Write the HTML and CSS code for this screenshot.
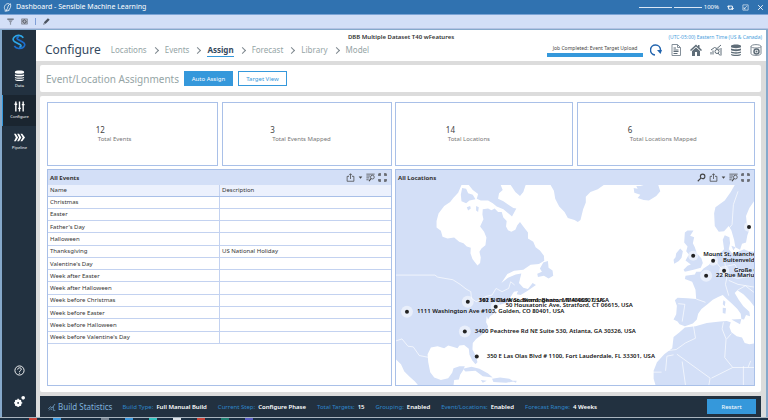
FILE: index.html
```html
<!DOCTYPE html>
<html lang="en">
<head>
  <meta charset="UTF-8" />
  <meta name="viewport" content="width=device-width, initial-scale=1.0"/>
  <title>Dashboard - Sensible Machine Learning</title>
  <link rel="stylesheet" href="styles.css">
</head>
<body>

  <!-- Shared icons -->
  <svg class="sprite" aria-hidden="true">
    <symbol id="i-share" viewBox="0 0 24 24"><path d="M8 9H3v13h18V9h-5M12 16V2M8 6l4-4 4 4" fill="none" stroke="currentColor" stroke-width="2"/></symbol>
    <symbol id="i-caret" viewBox="0 0 12 24"><path d="M1 9h10l-5 6z" fill="currentColor"/></symbol>
    <symbol id="i-filter" viewBox="0 0 24 24"><path d="M1 3h22M1 8h10M1 13h8M1 18h6" fill="none" stroke="currentColor" stroke-width="2"/><circle cx="17" cy="11" r="5" fill="none" stroke="currentColor" stroke-width="2"/><path d="M13 15l-5 7" stroke="currentColor" stroke-width="3"/></symbol>
    <symbol id="i-expand" viewBox="0 0 24 24"><path d="M2 8V2h6v6zM16 2h6v6h-6zM2 16h6v6H2zM16 16h6v6h-6z" fill="currentColor" opacity=".6"/><path d="M2 8V2h6M16 2h6v6M22 16v6h-6M8 22H2v-6" fill="none" stroke="currentColor" stroke-width="2"/></symbol>
    <symbol id="i-search" viewBox="0 0 24 24"><circle cx="15" cy="9" r="6" fill="none" stroke="currentColor" stroke-width="3"/><path d="M11 13l-9 9" stroke="currentColor" stroke-width="3"/></symbol>
    <symbol id="i-db" viewBox="0 0 24 24"><path d="M2 4c0-4 20-4 20 0v2c0 3-20 3-20 0zM2 9c3 2 17 2 20 0v3c0 3-20 3-20 0zM2 15c3 2 17 2 20 0v2c0 3-20 3-20 0zM2 20c3 2 17 2 20 0v1c0 4-20 4-20 0z" fill="currentColor"/></symbol>
  </svg>

  <header class="titlebar">
    <svg class="app-icon" viewBox="0 0 24 24"><path d="M17 2C8 0 2 8 4 15c1 5 8 9 14 3M20 2C11 5 15 14 8 20M20 2c2 8-1 14-6 17M4 21c3 2 6 1 8-3" fill="none" stroke="#fff" stroke-width="2"/></svg>
    <h1>Dashboard - Sensible Machine Learning</h1>
    <input class="zoom" type="range" min="0" max="100" value="54" aria-label="Zoom">
    <span class="zoom-value">100%</span>
    <button aria-label="Refresh"><svg viewBox="0 0 24 24"><path d="M5 16V7h13v5M19 9v9H6v-4M1 11l4-5 4 5M15 14l4 5 4-5" fill="none" stroke="#fff" stroke-width="3"/></svg></button>
    <button aria-label="Restore"><svg viewBox="0 0 24 24"><path d="M3 3h18v18H3zM7 17L17 7M7 11v6h6" fill="none" stroke="#fff" stroke-width="2"/></svg></button>
    <button aria-label="Close"><svg viewBox="0 0 24 24"><path d="M4 4l16 16M20 4L4 20" stroke="#fff" stroke-width="3"/></svg></button>
  </header>

  <div class="toolbar">
    <button aria-label="Filter"><svg viewBox="0 0 24 24"><path d="M1 2h22v4H1z" fill="#555c68"/><path d="M4 8h16l-6 7v8h-4v-8z" fill="#8f97a6"/></svg></button>
    <button aria-label="Refresh data"><svg viewBox="0 0 24 24"><path d="M2 3h20v18H2z" fill="#b2b8c6" stroke="#6a707c" stroke-width="2"/><path d="M7 14a5 5 0 0 1 9-5M17 10a5 5 0 0 1-9 5" fill="none" stroke="#3c4048" stroke-width="3"/></svg></button>
    <span class="divider"></span>
    <button aria-label="Edit"><svg viewBox="0 0 24 24"><path d="M1 23l3-9L17 1l6 5-13 13z" fill="#4b535f"/><path d="M1 23l3-8 5 5z" fill="#8f97a6"/></svg></button>
  </div>

  <div class="workspace">
    <nav class="rail">
      <svg class="logo" viewBox="0 0 48 48">
        <path d="M37 11C30 2 17 2 10 9c-5 5-5 11 1 14l17 9c4 3 2 7-3 8" fill="none" stroke="#2fa8e8" stroke-width="5"/>
        <path d="M10 36c6 9 20 10 28 3 5-5 4-11-2-14l-16-9c-4-3-1-7 4-8" fill="none" stroke="#1c6fd1" stroke-width="5"/>
      </svg>
      <a href="#"><svg viewBox="0 0 24 24"><use href="#i-db"/></svg>Data</a>
      <a href="#" class="active"><svg viewBox="0 0 24 24"><path d="M4 1v22M12 1v22M20 1v22M1 7h6M9 16h6M17 8h6" stroke="currentColor" stroke-width="3"/></svg>Configure</a>
      <a href="#"><svg viewBox="0 0 24 24"><path d="M0 4h4l5 8-5 8H0l4-8zM7 4h4l5 8-5 8H7l4-8zM14 4h4l6 8-6 8h-4l5-8z" fill="currentColor"/></svg>Pipeline</a>
      <button class="help" aria-label="Help"><svg viewBox="0 0 24 24"><circle cx="12" cy="12" r="10" fill="none" stroke="#fff" stroke-width="2"/><path d="M8 10c0-5 8-5 8-1 0 3-4 3-4 6M12 17v2" fill="none" stroke="#fff" stroke-width="2"/></svg></button>
      <button aria-label="Settings"><svg viewBox="0 0 24 24"><circle cx="9" cy="15" r="5" fill="none" stroke="#fff" stroke-width="5"/><path d="M9 6v18M0 15h18M3 9l12 12M15 9L3 21" stroke="#fff" stroke-width="3"/><circle cx="9" cy="15" r="2" fill="#223140"/><circle cx="20" cy="4" r="4" fill="#fff"/></svg></button>
    </nav>

    <main>
      <div class="page-head">
        <div class="head-top">
          <strong>DBB Multiple Dataset T40 wFeatures</strong>
          <a href="#" class="timezone">(UTC-05:00) Eastern Time (US &amp; Canada)</a>
        </div>
        <div class="head-main">
          <h2>Configure</h2>
          <ol class="steps">
            <li><a href="#">Locations</a></li>
            <li><a href="#">Events</a></li>
            <li><a href="#" class="current">Assign</a></li>
            <li><a href="#">Forecast</a></li>
            <li><a href="#">Library</a></li>
            <li><a href="#">Model</a></li>
          </ol>
          <div class="job">
            <span>Job Completed: Event Target Upload</span>
            <div class="job-bar"></div>
          </div>
          <div class="head-icons">
            <button aria-label="Refresh job"><svg viewBox="0 0 24 24"><path d="M10 22A10 10 0 1 1 21 12" fill="none" stroke="#2264ae" stroke-width="3"/><path d="M14 12h10l-3 8z" fill="#2264ae"/></svg></button>
            <button aria-label="Log"><svg viewBox="0 0 24 24"><path d="M4 1h11l6 6v16H4zM15 1v6h6" fill="none" stroke="#85909a" stroke-width="2"/><path d="M7 8h5M7 12h10M7 15h10M7 19h8" stroke="#5f6d78" stroke-width="2"/></svg></button>
            <button aria-label="Home"><svg viewBox="0 0 24 24"><path d="M12 1L0 12l2 2 10-9 10 9 2-2-5-5V2h-3v3z" fill="#5f6d78"/><path d="M4 14l8-7 8 7v10h-6v-8h-4v8H4z" fill="#5f6d78"/></svg></button>
            <button aria-label="Analysis"><svg viewBox="0 0 24 24"><path d="M2 12l7-5 5 2 8-7M2 16v5M6 13v8M22 8v15M18 9v3" fill="none" stroke="#5f6d78" stroke-width="2"/><circle cx="14" cy="15" r="4" fill="none" stroke="#5f6d78" stroke-width="2"/><path d="M16 18l4 5" stroke="#5f6d78" stroke-width="2"/></svg></button>
            <button aria-label="Data sources"><svg viewBox="0 0 24 24"><use href="#i-db"/></svg></button>
            <button aria-label="Data preview"><svg viewBox="0 0 24 24"><path d="M2 5c0-5 20-5 20 0v14c0 5-20 5-20 0zM2 5c0 4 20 4 20 0" fill="none" stroke="#7d8892" stroke-width="2"/><circle cx="13" cy="15" r="5" fill="none" stroke="#5f6d78" stroke-width="3"/><circle cx="13" cy="15" r="2" fill="#5f6d78"/></svg></button>
          </div>
        </div>
      </div>

      <div class="card sub-head">
        <h3>Event/Location Assignments</h3>
        <button class="btn primary">Auto Assign</button>
        <button class="btn">Target View</button>
      </div>

      <div class="card board">
        <div class="tiles">
          <div class="tile"><b>12</b><span>Total Events</span></div>
          <div class="tile"><b>3</b><span>Total Events Mapped</span></div>
        </div>
        <div class="tiles">
          <div class="tile"><b>14</b><span>Total Locations</span></div>
          <div class="tile"><b>6</b><span>Total Locations Mapped</span></div>
        </div>

        <section class="panel">
          <div class="panel-head">
            <h4>All Events</h4>
            <button aria-label="Export"><svg viewBox="0 0 24 24"><use href="#i-share"/></svg></button>
            <button class="caret" aria-label="Export options"><svg viewBox="0 0 12 24"><use href="#i-caret"/></svg></button>
            <button aria-label="Filter rows"><svg viewBox="0 0 24 24"><use href="#i-filter"/></svg></button>
            <button aria-label="Maximize"><svg viewBox="0 0 24 24"><use href="#i-expand"/></svg></button>
          </div>
          <table>
            <thead>
              <tr><th>Name</th><th>Description</th></tr>
            </thead>
            <tbody>
              <tr><td>Christmas</td><td></td></tr>
              <tr><td>Easter</td><td></td></tr>
              <tr><td>Father's Day</td><td></td></tr>
              <tr><td>Halloween</td><td></td></tr>
              <tr><td>Thanksgiving</td><td>US National Holiday</td></tr>
              <tr><td>Valentine's Day</td><td></td></tr>
              <tr><td>Week after Easter</td><td></td></tr>
              <tr><td>Week after Halloween</td><td></td></tr>
              <tr><td>Week before Christmas</td><td></td></tr>
              <tr><td>Week before Easter</td><td></td></tr>
              <tr><td>Week before Halloween</td><td></td></tr>
              <tr><td>Week before Valentine's Day</td><td></td></tr>
            </tbody>
          </table>
        </section>

        <section class="panel">
          <div class="panel-head">
            <h4>All Locations</h4>
            <button aria-label="Search"><svg viewBox="0 0 24 24"><use href="#i-search"/></svg></button>
            <button aria-label="Export"><svg viewBox="0 0 24 24"><use href="#i-share"/></svg></button>
            <button class="caret" aria-label="Export options"><svg viewBox="0 0 12 24"><use href="#i-caret"/></svg></button>
            <button aria-label="Filter rows"><svg viewBox="0 0 24 24"><use href="#i-filter"/></svg></button>
            <button aria-label="Maximize"><svg viewBox="0 0 24 24"><use href="#i-expand"/></svg></button>
          </div>
          <div class="map">
            <svg viewBox="0 0 359 201" preserveAspectRatio="xMidYMid slice">
              <svg width="359" height="201" viewBox="15 57 1077 603">
                <g class="land">
                  <!-- North America -->
                  <path d="M15 57H212L202 80 188 95 178 108 160 120 143 143 137 165 137 185 150 195 155 213 170 218 190 215 205 228 218 232 228 242 240 246 239 262 245 280 260 299 268 292 270 275 266 258 272 248 284 238 287 215 280 198 268 182 278 160 275 146 276 130 292 128 302 133 312 128 322 138 333 138 338 155 348 165 346 182 352 193 362 198 374 192 380 178 388 168 398 182 412 200 412 218 428 228 435 244 448 254 460 270 461 285 445 295 420 297 398 312 370 315 350 325 338 343 332 352 352 336 375 326 392 323 388 340 385 352 398 366 412 370 426 352 436 358 410 376 390 388 378 386 382 376 370 378 358 396 360 408 345 412 325 418 313 430 308 445 298 452 292 462 288 452 286 470 292 482 288 495 272 508 256 520 246 532 245 552 256 572 260 590 254 596 244 584 236 568 234 550 220 538 206 540 200 548 188 544 172 540 160 548 140 542 120 546 110 566 112 590 118 620 130 636 150 644 172 638 184 622 188 608 206 602 222 602 216 616 208 628 204 642 190 644 188 660H82L72 648 56 634 40 618 30 596 15 582z"/>
                  <path d="M234 57H330L336 72 325 82 322 98 338 106 352 116 368 126 377 128 364 152 348 138 338 130 318 122 306 112 292 104 270 104 258 98 262 84 246 72zM360 57H405L398 78 388 90 374 78z"/>
                  <path d="M210 86L214 66 226 68 232 82 246 86 254 100 236 104 226 112 212 106zM228 124l10-4 2 8-8 6zM256 120l8 4-2 14-6-4zM448 308l10-18 14-4 2 20 12 8 2 16-14 8-14-8-18 4-2-10 14-6z"/>
                  <path d="M216 610l26-6 24 6 26 14 14 12-30-4-22-16-30 2zM304 640l24-4 28 4 14 8-24 4-38-2zM270 644l18 2-12 6zM362 646l16 0-2 6z"/>
                  <!-- Greenland and Iceland -->
                  <path d="M480 57L490 74 494 98 506 122 522 138 532 156 552 162 562 168 570 162 578 130 586 110 586 92 600 78 622 70 640 57z"/>
                  <path d="M730 66L742 68 738 60 750 60 760 57H804L810 76 798 90 776 104 760 102 742 96 750 86 732 80z"/>
                  <!-- British Isles -->
                  <path d="M884 200L892 194H910L900 210 912 214 908 232 914 244 920 262 934 278 938 292 932 306 910 312 884 318 880 312 892 300 902 296 886 284 896 266 888 256 892 242 882 230z"/>
                  <path d="M858 262L870 248 878 256 874 276 866 286 852 294 850 282 856 274z"/>
                  <!-- Scandinavia -->
                  <path d="M1034 57L1022 78 1004 104 976 124 972 142 974 180 986 198 1002 196 1016 180 1024 194 1032 222 1036 244 1050 252 1056 234 1068 230 1072 208 1080 186 1070 170 1068 150 1078 126 1092 106V57z"/>
                  <!-- Europe -->
                  <path d="M1092 258L1076 256 1062 250 1044 258 1026 262 1016 250 1020 232 1018 214 1004 208 998 222 1002 250 990 262 976 266 968 282 956 298 940 308 932 318 918 318 914 326 886 330 884 340 906 348 916 372 918 400 892 398 862 396 854 404 860 420 858 446 850 462 862 468 868 476 884 482 908 474 920 462 924 444 934 430 952 416 968 402 984 394 998 388 1010 400 1026 414 1042 430 1052 444 1054 460 1062 462 1068 448 1080 452 1078 438 1060 422 1046 402 1034 382 1042 374 1060 386 1080 406 1092 422z"/>
                  <path d="M1000 404l6 4-2 14-6-6zM998 426l10 2-2 16-8-2zM1024 462l30-2-4 16zM1024 240l12 4-6 10z"/>
                  <!-- Africa -->
                  <path d="M884 486L916 482 950 472 990 468 1010 466 1022 470 1018 484 1024 500 1040 512 1056 516 1064 532 1078 536 1092 534V660H796L790 640 790 616 800 590 822 566 846 548 850 514 868 500z"/>
                </g>
                <g class="border">
                  <path d="M15 328H132l8 6 22 4 24 4 22 14 18 14 14 8 2 20 14 10 10-4 20-12 18-4 12-20 18 10 20-10 6-20 12 10M15 526l18-6 18 22 16 2 18 26 30 6"/>
                  <path d="M1044 76l-14 40-4 60-8 10M918 400l28 10M864 414l20 2-4 26-4 26M972 282l18 22 22 24-6 28 10 34M1000 262l6 40 28-6 12 20 40 8M1012 328l30 10 50-8M1016 344l28 12 48 8M1042 374l24-14 26 20"/>
                  <path d="M910 482l6 36-30 14-28 20-50 6-12 30-18 32h36M850 568l-20 4-4 44M860 566l100 72-4 22M876 588l10 72M1000 470l-4 20 12 30-4 56 24 30 64 0M1010 520l14-16M1028 606l-64 32M1060 602v58M1074 606l8-20"/>
                </g>
              </svg>
              <g class="halo">
                <circle cx="72" cy="117" r="6"/><circle cx="11" cy="127" r="6"/><circle cx="69" cy="147" r="6"/>
                <circle cx="100" cy="122" r="5"/><circle cx="298" cy="71" r="5"/><circle cx="318" cy="76" r="5"/>
                <circle cx="329" cy="86" r="5"/><circle cx="311" cy="91" r="6"/><circle cx="354" cy="42" r="5"/>
              </g>
              <g class="pin">
                <circle cx="72" cy="117" r="2"/><circle cx="11" cy="127" r="2"/><circle cx="69" cy="147" r="2"/>
                <circle cx="100" cy="122" r="2"/><circle cx="81" cy="172" r="2"/><circle cx="298" cy="71" r="2"/>
                <circle cx="318" cy="76" r="2"/><circle cx="329" cy="86" r="2"/><circle cx="311" cy="91" r="2"/>
                <circle cx="354" cy="42" r="2"/>
              </g>
              <g class="place">
                <text x="83" y="117">161 N Clark St, Birmingham, MI 48009, USA</text>
                <text x="83" y="117">392 S Old Woodward, Benton, MA 46307, USA</text>
                <text x="110" y="122">50 Housatonic Ave, Stratford, CT 06615, USA</text>
                <text x="21" y="128">1111 Washington Ave #103, Golden, CO 80401, USA</text>
                <text x="79" y="148">3400 Peachtree Rd NE Suite 530, Atlanta, GA 30326, USA</text>
                <text x="91" y="173">350 E Las Olas Blvd # 1100, Fort Lauderdale, FL 33301, USA</text>
                <text x="308" y="71">Mount St, Manchester</text>
                <text x="328" y="77">Buitenveldert</text>
                <text x="339" y="87">Große Gallusstraße</text>
                <text x="321" y="92">22 Rue Marius</text>
              </g>
            </svg>
          </div>
        </section>
      </div>

      <footer class="stats">
        <h4><svg viewBox="0 0 24 24"><path d="M1 18l6-7 5 4 9-12M3 22l5-5 4 3M16 10v12h6" fill="none" stroke="currentColor" stroke-width="2"/></svg>Build Statistics</h4>
        <dl>
          <div><dt>Build Type:</dt><dd>Full Manual Build</dd></div>
          <div><dt>Current Step:</dt><dd>Configure Phase</dd></div>
          <div><dt>Total Targets:</dt><dd>15</dd></div>
          <div><dt>Grouping:</dt><dd>Enabled</dd></div>
          <div><dt>Event/Locations:</dt><dd>Enabled</dd></div>
          <div><dt>Forecast Range:</dt><dd>4 Weeks</dd></div>
        </dl>
        <button class="btn primary">Restart</button>
      </footer>
    </main>
  </div>

  <div class="taskbar">
    <i class="red"></i><i class="blue"></i><i></i><i class="grey"></i><i class="blue"></i><i class="teal"></i><i class="white"></i><i class="red"></i><i class="green"></i><i class="purple"></i>
  </div>

</body>
</html>
```
FILE: styles.css
```css
* {
  box-sizing: border-box;
  margin: 0;
  padding: 0;
}

body {
  background: #1b2f42;
  color: #444;
  display: flex;
  flex-direction: column;
  font-family: "Noto Sans", "Open Sans", sans-serif;
  font-size: 6px;
  line-height: 8px;
  min-height: 100vh;
}

button {
  background: none;
  border: none;
  color: inherit;
  cursor: pointer;
  font: inherit;
}

a {
  color: inherit;
  text-decoration: none;
}

svg {
  display: block;
}

.sprite {
  display: none;
}

/* Window chrome */
.titlebar {
  align-items: center;
  background: #3072b0;
  border-bottom: 1px solid #7ba4d6;
  color: #fff;
  display: flex;
  height: 15px;
  padding: 0 4px 0 3px;
}

.titlebar h1 {
  flex: 1;
  font-size: 7px;
  font-weight: 400;
  margin-left: 4px;
}

.app-icon {
  height: 9px;
  width: 9px;
}

.titlebar button svg {
  height: 7px;
  width: 7px;
}

.titlebar button {
  margin-left: 8px;
}

.zoom {
  appearance: none;
  background: #dbe7f5;
  height: 1px;
  width: 63px;
}

.zoom::-webkit-slider-thumb {
  appearance: none;
  background: #3072b0;
  height: 3px;
  width: 2px;
}

.zoom-value {
  margin-left: 2px;
}

.toolbar {
  align-items: center;
  background: #d3dff7;
  border-bottom: 1px solid #b4c3e4;
  display: flex;
  gap: 7px;
  height: 14px;
  padding: 0 7px;
}

.toolbar svg {
  height: 7px;
  width: 7px;
}

.divider {
  background: #7f9fd8;
  height: 7px;
  width: 1px;
}

.workspace {
  background: #dcdcdc;
  border: solid #86a9cb;
  border-width: 1px 2px 0;
  display: flex;
  flex: 1;
}

/* Side rail */
.rail {
  background: #223140;
  color: #fff;
  display: flex;
  flex-direction: column;
  width: 34px;
}

.logo {
  height: 16px;
  margin: 4px auto 14px;
  width: 16px;
}

.rail a {
  align-items: center;
  border-left: 1px solid transparent;
  color: #fff;
  display: flex;
  flex-direction: column;
  font-size: 4px;
  height: 31px;
  line-height: 6px;
  justify-content: center;
  gap: 2px;
}

.rail a svg {
  height: 11px;
  width: 11px;
}

.rail a.active {
  background: #1a2530;
  border-left-color: #3598db;
}

.rail button svg {
  height: 11px;
  margin: 0 auto;
  width: 11px;
}

.rail button {
  margin-bottom: 10px;
}

.rail .help {
  margin-bottom: 20px;
  margin-top: auto;
}

main {
  display: flex;
  flex: 1;
  flex-direction: column;
  gap: 4px;
  min-width: 0;
}

/* Page header */
.page-head {
  background: #fff;
  height: 31px;
  padding: 3px 4px 0;
}

.head-top {
  display: grid;
  grid-template-columns: 1fr auto 1fr;
}

.head-top strong {
  color: #333;
  font-weight: 600;
  grid-column: 2;
}

.timezone {
  color: #4aa0dd;
  font-size: 5px;
  justify-self: end;
}

.head-main {
  align-items: center;
  display: flex;
  height: 18px;
  padding-left: 5px;
}

.head-main h2 {
  color: #34495e;
  font-size: 12px;
  font-weight: 400;
  line-height: 18px;
}

.steps {
  color: #95a5a6;
  display: flex;
  font-size: 8px;
  line-height: 12px;
  list-style: none;
  margin-left: 10px;
}

.steps li {
  align-items: center;
  display: flex;
}

.steps li + li::before {
  border: solid #7d878e;
  border-width: 1px 1px 0 0;
  content: "";
  height: 4px;
  margin: 0 7px 0 6px;
  transform: rotate(45deg);
  width: 4px;
}

.steps a {
  border-bottom: 1px solid transparent;
  padding-top: 1px;
}

.steps .current {
  border-color: #3598db;
  color: #34495e;
  font-weight: 700;
}

.job {
  font-size: 5px;
  margin-left: auto;
  text-align: center;
  white-space: nowrap;
  width: 96px;
}

.job-bar {
  background: #3598db;
  height: 4px;
  margin-top: 1px;
}

.head-icons {
  color: #5f6d78;
  display: flex;
  gap: 8px;
  margin-left: 7px;
}

.head-icons svg {
  height: 12px;
  width: 12px;
}

/* Cards */
.card {
  background: #fff;
  border-radius: 2px;
  margin: 0 5px 0 4px;
}

.sub-head {
  align-items: center;
  display: flex;
  gap: 5px;
  height: 27px;
  padding: 0 6px;
}

.sub-head h3 {
  color: #95a5a6;
  font-size: 10px;
  font-weight: 400;
}

.btn {
  border: 1px solid #3598db;
  color: #3598db;
  height: 15px;
  width: 49px;
}

.btn.primary {
  background: #3598db;
  color: #fff;
}

.board {
  display: grid;
  flex: 1;
  gap: 3px;
  grid-template-columns: 345fr 360fr;
  grid-template-rows: 64px 1fr;
  padding: 6px 6px 6px 7px;
}

.tiles {
  display: grid;
  gap: 4px;
  grid-template-columns: 1fr 1fr;
}

.tile,
.panel {
  border: 1px solid #a9c0e8;
}

.tile {
  padding: 22px 0 0 28%;
}

.tile b {
  display: block;
  font-size: 8px;
  font-weight: 400;
  line-height: 10px;
}

.tile span {
  color: #777;
  margin-left: 2px;
}

.panel {
  display: flex;
  flex-direction: column;
  min-width: 0;
}

.panel-head {
  align-items: center;
  background: #d3dff7;
  display: flex;
  gap: 3px;
  height: 15px;
  padding: 0 4px 0 2px;
}

.panel-head h4 {
  color: #333;
  flex: 1;
}

.panel-head svg {
  height: 9px;
  width: 9px;
}

.panel-head .caret svg {
  width: 5px;
}

table {
  border-collapse: collapse;
  color: #333;
  height: 159px;
  table-layout: fixed;
  width: 100%;
}

th,
td {
  border-bottom: 1px solid #c3d2f0;
  font-weight: 400;
  padding: 0 2px;
  text-align: left;
}

th + th,
td + td {
  border-left: 1px solid #c3d2f0;
}

th {
  background: #ecf1fd;
  border-color: #a9c0e8;
  height: 11px;
}

/* Map */
.map {
  flex: 1;
  overflow: hidden;
}

.map > svg {
  height: 100%;
  width: 100%;
}

.land {
  fill: #d3dff7;
}

.border {
  fill: none;
  stroke: #fff;
  stroke-width: 2;
}

.halo {
  fill: #fff;
  opacity: .5;
}

.pin {
  fill: #222;
}

.place {
  fill: #111;
  font-size: 6px;
  font-weight: 600;
}

/* Footer */
.stats {
  align-items: center;
  background: #223140;
  color: #fff;
  display: flex;
  height: 21px;
  margin: 0 5px 0 4px;
  padding: 0 5px 0 8px;
}

.stats h4 {
  align-items: center;
  color: #7fb2dc;
  display: flex;
  font-size: 8px;
  font-weight: 400;
  gap: 2px;
}

.stats h4 svg {
  height: 8px;
  width: 8px;
}

.stats dl {
  display: flex;
  flex: 1;
  gap: 11px;
  margin-left: 10px;
}

.stats dl div {
  display: flex;
  gap: 3px;
}

.stats dt {
  color: #2f86c9;
}

.stats dd {
  font-weight: 600;
}

.taskbar {
  border-top: 1px solid #a9b4be;
  display: flex;
  gap: 16px;
  height: 3px;
  padding-left: 29px;
}

.taskbar i {
  height: 2px;
  width: 8px;
}

.red { background: #c9463c; }
.blue { background: #3f9be0; }
.grey { background: #7c8894; }
.teal { background: #35c4c0; }
.white { background: #dfe5ea; }
.green { background: #1f7f72; }
.purple { background: #5a5fc4; }
```
